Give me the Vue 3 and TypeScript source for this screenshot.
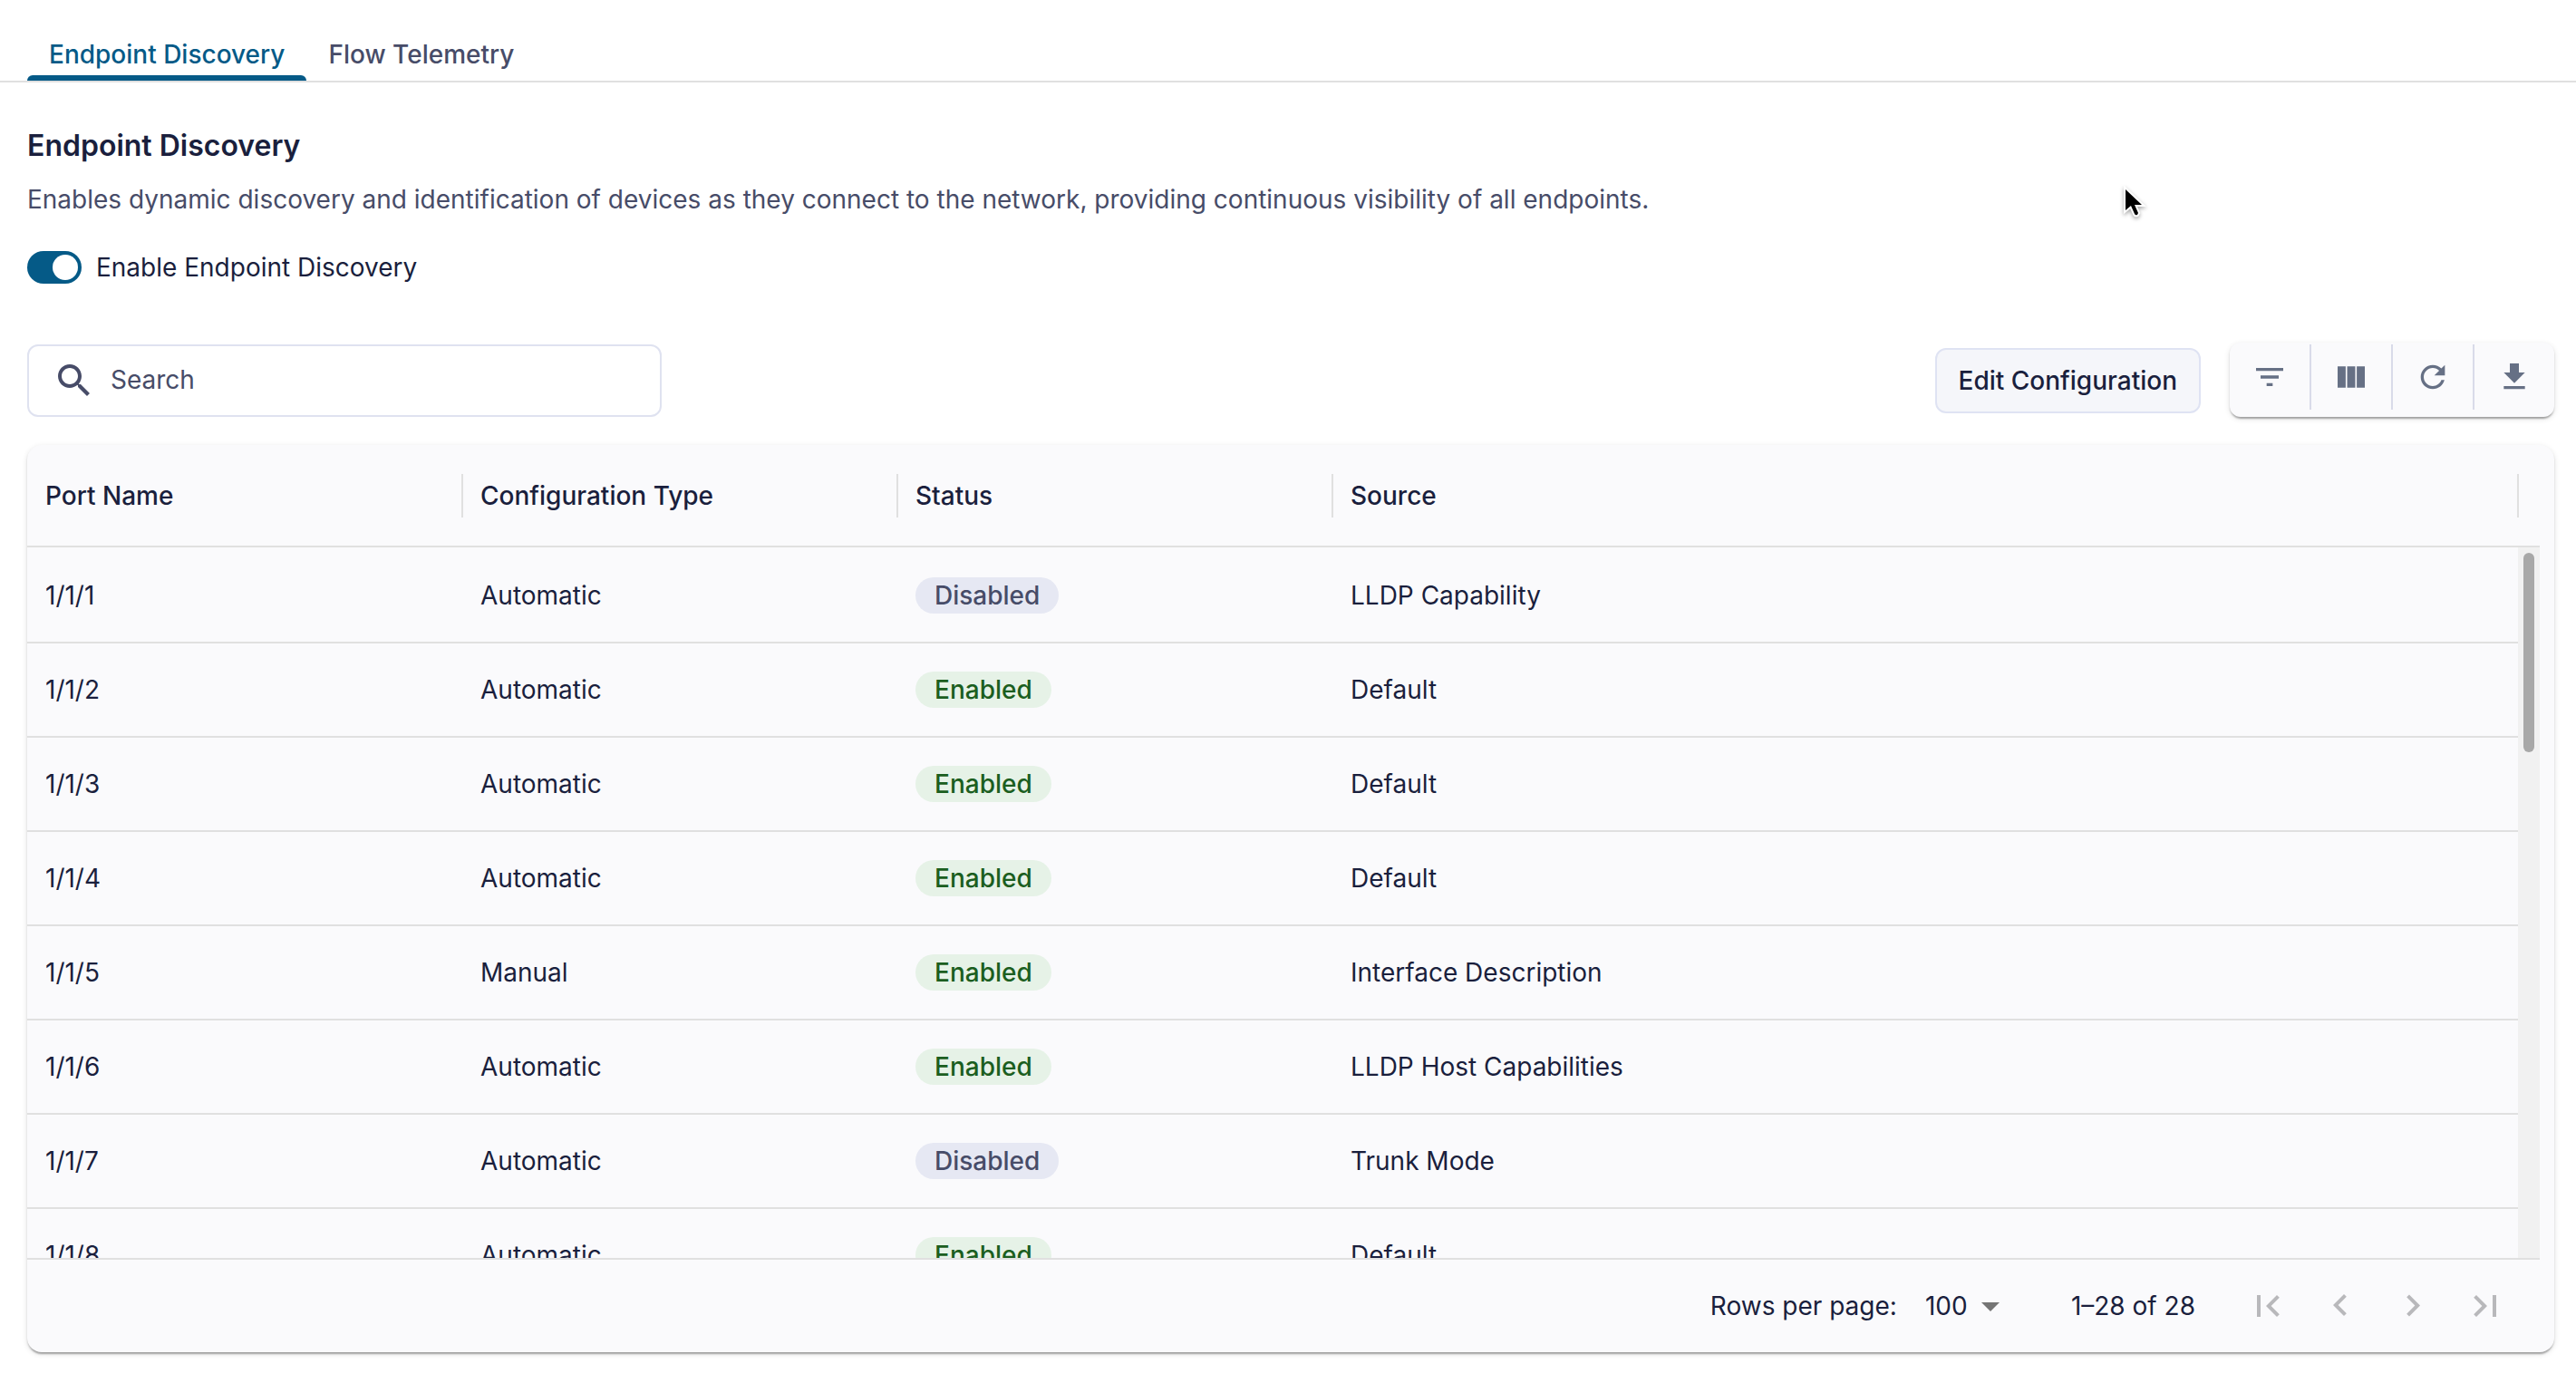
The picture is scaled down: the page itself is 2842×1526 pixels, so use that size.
<script setup lang="ts">
import { ref } from 'vue'

interface PortRow {
  port: string
  type: string
  enabled: boolean
  source: string
}

const tabs = ['Endpoint Discovery', 'Flow Telemetry']
const activeTab = ref(0)
const discoveryOn = ref(true)
const query = ref('')
const pageSize = ref('100')

const columns = ['Port Name', 'Configuration Type', 'Status', 'Source']

const rows: PortRow[] = [
  { port: '1/1/1', type: 'Automatic', enabled: false, source: 'LLDP Capability' },
  { port: '1/1/2', type: 'Automatic', enabled: true, source: 'Default' },
  { port: '1/1/3', type: 'Automatic', enabled: true, source: 'Default' },
  { port: '1/1/4', type: 'Automatic', enabled: true, source: 'Default' },
  { port: '1/1/5', type: 'Manual', enabled: true, source: 'Interface Description' },
  { port: '1/1/6', type: 'Automatic', enabled: true, source: 'LLDP Host Capabilities' },
  { port: '1/1/7', type: 'Automatic', enabled: false, source: 'Trunk Mode' },
  { port: '1/1/8', type: 'Automatic', enabled: true, source: 'Default' },
]

const tools = [
  { label: 'Filter', path: 'M10 18h4v-2h-4v2zM3 6v2h18V6H3zm3 7h12v-2H6v2z' },
  { label: 'Columns', path: 'M14.67 5v14H9.33V5h5.34zm1 14H21V5h-5.33v14zm-7.34 0V5H3v14h5.33z' },
  {
    label: 'Refresh',
    path: 'M17.65 6.35C16.2 4.9 14.21 4 12 4c-4.42 0-7.99 3.58-7.99 8s3.57 8 7.99 8c3.73 0 6.84-2.55 7.73-6h-2.08c-.82 2.33-3.04 4-5.65 4-3.31 0-6-2.69-6-6s2.69-6 6-6c1.66 0 3.14.69 4.22 1.78L13 11h7V4l-2.35 2.35z',
  },
  { label: 'Download', path: 'M19 9h-4V3H9v6H5l7 7 7-7zM5 18v2h14v-2H5z' },
]

const pagers = [
  { label: 'First page', path: 'M18.41 16.59L13.82 12l4.59-4.59L17 6l-6 6 6 6zM6 6h2v12H6z' },
  { label: 'Previous page', path: 'M15.41 16.09l-4.58-4.59 4.58-4.59L14 5.5l-6 6 6 6z' },
  { label: 'Next page', path: 'M8.59 16.34l4.58-4.59-4.58-4.59L10 5.75l6 6-6 6z' },
  { label: 'Last page', path: 'M5.59 7.41L10.18 12l-4.59 4.59L7 18l6-6-6-6zM16 6h2v12h-2z' },
]
</script>

<template>
  <div class="page">
    <nav class="tabs" role="tablist">
      <button
        v-for="(tab, i) in tabs"
        :key="tab"
        class="tab"
        :class="{ active: activeTab === i }"
        role="tab"
        type="button"
        :aria-selected="activeTab === i"
        @click="activeTab = i"
      >
        {{ tab }}
      </button>
    </nav>

    <main class="content">
      <h1 class="title">Endpoint Discovery</h1>
      <p class="description">
        Enables dynamic discovery and identification of devices as they connect to the network, providing continuous visibility of all endpoints.
      </p>
      <label class="toggle">
        <input v-model="discoveryOn" class="switch" type="checkbox" />
        <span>Enable Endpoint Discovery</span>
      </label>

      <div class="toolbar">
        <label class="search">
          <svg class="search-icon" viewBox="0 0 24 24" aria-hidden="true">
            <path d="M15.5 14h-.79l-.28-.27C15.41 12.59 16 11.11 16 9.5 16 5.91 13.09 3 9.5 3S3 5.91 3 9.5 5.91 16 9.5 16c1.61 0 3.09-.59 4.23-1.57l.27.28v.79l5 4.99L20.49 19l-4.99-5zm-6 0C7.01 14 5 11.99 5 9.5S7.01 5 9.5 5 14 7.01 14 9.5 11.99 14 9.5 14z" />
          </svg>
          <input v-model="query" class="search-input" type="text" placeholder="Search" aria-label="Search" />
        </label>
        <div class="actions">
          <button class="edit" type="button">Edit Configuration</button>
          <div class="tools">
            <button v-for="tool in tools" :key="tool.label" class="tool" type="button" :aria-label="tool.label">
              <svg class="tool-icon" viewBox="0 0 24 24" aria-hidden="true"><path :d="tool.path" /></svg>
            </button>
          </div>
        </div>
      </div>

      <section class="card">
        <div class="viewport">
          <table class="ports">
            <thead>
              <tr>
                <th v-for="column in columns" :key="column" scope="col">
                  <div class="head-cell">{{ column }}</div>
                </th>
              </tr>
            </thead>
            <tbody>
              <tr v-for="row in rows" :key="row.port">
                <td>{{ row.port }}</td>
                <td>{{ row.type }}</td>
                <td>
                  <div class="chip" :class="row.enabled ? 'on' : 'off'">{{ row.enabled ? 'Enabled' : 'Disabled' }}</div>
                </td>
                <td>{{ row.source }}</td>
              </tr>
            </tbody>
          </table>
          <div class="scrollbar" aria-hidden="true"><div class="thumb"></div></div>
        </div>

        <footer class="pagination">
          <label class="page-label" for="page-size">Rows per page:</label>
          <div class="select-wrap">
            <select id="page-size" v-model="pageSize" class="page-size">
              <option>100</option>
            </select>
            <svg class="caret" viewBox="0 0 24 24" aria-hidden="true"><path d="M7 10l5 5 5-5z" /></svg>
          </div>
          <span class="range">1–28 of 28</span>
          <div class="pagers">
            <button v-for="pager in pagers" :key="pager.label" class="pager" type="button" disabled :aria-label="pager.label">
              <svg class="pager-icon" viewBox="0 0 24 24" aria-hidden="true"><path :d="pager.path" /></svg>
            </button>
          </div>
        </footer>
      </section>
    </main>

    <svg class="pointer" viewBox="0 0 28 40" aria-hidden="true">
      <path d="M5 5v23l6-5 4 9q1 2 3 1l1-2-4-9h8z" />
    </svg>
  </div>
</template>

<style>
body {
  background: #fff;
}
</style>

<style scoped>
.page {
  position: relative;
  display: flex;
  flex-direction: column;
  box-sizing: border-box;
  height: 100vh;
  padding-bottom: 34px;
  overflow: hidden;
  color: #1a1f3d;
  font-family: Inter, 'Liberation Sans', sans-serif;
  font-size: 28px;
  line-height: 40px;
}

button,
input,
select {
  margin: 0;
  color: inherit;
  font: inherit;
}

svg {
  display: block;
  fill: currentColor;
}

.tabs {
  display: flex;
  padding: 32px 30px 0;
  border-bottom: 2px solid #e0e0e0;
}

.tab {
  position: relative;
  padding: 8px 24px 9px;
  border: 0;
  background: none;
  color: #474c68;
  font-weight: 500;
}

.tab.active {
  color: #055a87;
}

.tab.active::after {
  content: '';
  position: absolute;
  right: 0;
  bottom: 0;
  left: 0;
  height: 6px;
  border-radius: 6px 6px 0 0;
  background: #055a87;
}

.content {
  display: flex;
  flex: 1;
  flex-direction: column;
  min-height: 0;
  padding: 50px 24px 0 30px;
}

.title {
  margin: 0;
  font-size: 32px;
  font-weight: 600;
  line-height: 40px;
}

.description {
  margin: 19px 0 0;
  color: #474c68;
}

.toggle {
  display: flex;
  gap: 16px;
  align-items: center;
  align-self: flex-start;
  margin-top: 35px;
}

.switch {
  appearance: none;
  box-sizing: border-box;
  width: 60px;
  height: 36px;
  padding: 4px;
  border-radius: 18px;
  background: #9aa0b4;
}

.switch::before {
  content: '';
  display: block;
  width: 28px;
  height: 28px;
  border-radius: 14px;
  background: #fff;
}

.switch:checked {
  padding-left: 28px;
  background: #055a87;
}

.toolbar {
  display: flex;
  align-items: flex-end;
  justify-content: space-between;
  margin-top: 63px;
}

.search {
  display: flex;
  gap: 16px;
  align-items: center;
  box-sizing: border-box;
  width: 700px;
  height: 80px;
  padding: 0 26px;
  border: 2px solid #dfe2f0;
  border-radius: 12px;
}

.search-icon {
  flex: none;
  width: 48px;
  height: 48px;
  color: #474c68;
}

.search-input {
  flex: 1;
  min-width: 0;
  padding: 0 0 2px;
  border: 0;
  outline: 0;
  background: none;
}

.search-input::placeholder {
  color: #474c68;
  opacity: 1;
}

.actions {
  display: flex;
  gap: 32px;
  align-items: center;
}

.edit {
  margin-top: 2px;
  padding: 14px 24px;
  border: 2px solid #dfe3f3;
  border-radius: 12px;
  background: #f5f6fa;
  font-weight: 500;
}

.tools,
.card {
  background: #fafafc;
  box-shadow:
    0 4px 2px -2px rgba(0, 0, 0, 0.2),
    0 2px 2px rgba(0, 0, 0, 0.14),
    0 2px 6px rgba(0, 0, 0, 0.12);
}

.tools {
  display: flex;
  padding: 2px 0 8px;
  border-radius: 12px;
}

.tool {
  padding: 16px 24px;
  border: 0;
  background: none;
  color: #667085;
}

.tool + .tool {
  border-left: 2px solid #d9dbe9;
}

.tool-icon {
  width: 40px;
  height: 40px;
}

.card {
  display: flex;
  flex: 1;
  flex-direction: column;
  min-height: 0;
  margin-top: 31px;
  border-radius: 16px;
}

.viewport {
  position: relative;
  flex: 1;
  min-height: 0;
  margin-right: 16px;
  overflow: hidden;
  border-bottom: 2px solid #e0e0e0;
}

.ports {
  width: 100%;
  border-spacing: 0;
  table-layout: fixed;
}

th {
  width: 480px;
  box-sizing: border-box;
  height: 113px;
  padding: 0;
  border-bottom: 2px solid #e0e0e0;
  font-weight: 500;
  text-align: left;
}

th:last-child {
  width: auto;
  padding-right: 24px;
}

.head-cell {
  margin-right: -1px;
  padding: 4px 20px;
  border-right: 2px solid #e0e0e0;
}

td {
  box-sizing: border-box;
  height: 104px;
  padding: 0 20px;
  border-bottom: 2px solid #e0e0e0;
}

tbody tr:first-child td {
  height: 106px;
  padding-top: 2px;
}

.chip {
  width: fit-content;
  padding: 0 21px;
  border-radius: 20px;
  font-weight: 500;
}

.chip.on {
  background: #e6f2e7;
  color: #1b5e20;
}

.chip.off {
  background: #e6e8f3;
  color: #474c68;
}

.scrollbar {
  position: absolute;
  top: 113px;
  right: 0;
  bottom: 0;
  width: 24px;
  background: #f1f1f1;
}

.thumb {
  width: 12px;
  height: 28%;
  margin: 6px auto;
  border-radius: 6px;
  background: #a8a8a8;
}

.pagination {
  display: flex;
  align-items: center;
  justify-content: flex-end;
  height: 102px;
  padding-right: 36px;
}

.select-wrap {
  display: flex;
  align-items: center;
  margin: 0 65px 0 31px;
}

.page-size {
  appearance: none;
  width: 96px;
  height: 40px;
  padding: 0;
  border: 0;
  outline: 0;
  background: none;
}

.caret {
  width: 48px;
  height: 48px;
  margin-left: -48px;
  color: #757575;
  pointer-events: none;
}

.pagers {
  display: flex;
  margin-left: 40px;
}

.pager {
  padding: 16px;
  border: 0;
  background: none;
  color: #b8b8bb;
}

.pager-icon {
  width: 48px;
  height: 48px;
}

.pointer {
  position: absolute;
  top: 204px;
  left: 2340px;
  width: 28px;
  height: 40px;
  overflow: visible;
  fill: #000;
  stroke: #fff;
  stroke-width: 4px;
  paint-order: stroke;
  filter: drop-shadow(0 2px 2px rgba(0, 0, 0, 0.35));
  pointer-events: none;
}
</style>
